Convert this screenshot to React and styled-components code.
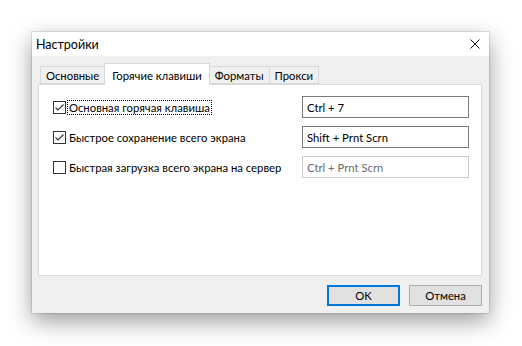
import React from "react";
import styled, { createGlobalStyle } from "styled-components";

const GlobalStyle = createGlobalStyle`
  html, body {
    margin: 0;
    background: #ffffff;
  }
  body {
    font-family: Lato, "Noto Sans", sans-serif;
    font-size: 11.3px;
    color: #000;
  }
`;

const Page = styled.div`
  width: 522px;
  height: 346px;
  padding: 32px 0 0 32px;
  box-sizing: border-box;
`;

const Window = styled.div`
  width: 457px;
  height: 281px;
  background: #f0f0f0;
  display: flex;
  flex-direction: column;
  box-shadow: 0 0 0 1px rgba(0, 0, 0, 0.1), 0 8px 22px rgba(0, 0, 0, 0.4);
`;

const TitleBar = styled.div`
  height: 25px;
  background: #ffffff;
  display: flex;
  align-items: center;
  justify-content: space-between;
  padding: 0 9px 0 4px;
  font-size: 12.5px;
`;

const CloseButton = styled.div`
  width: 10px;
  height: 10px;
  display: flex;
`;

const Body = styled.div`
  flex: 1;
  display: flex;
  flex-direction: column;
  padding: 7px 7px 7px 6px;
`;

const TabStrip = styled.div`
  display: flex;
  align-items: flex-end;
  height: 21px;
  padding-left: 3px;
  position: relative;
  z-index: 1;
`;

const Tab = styled.div`
  box-sizing: border-box;
  height: ${({ $active }) => ($active ? "22px" : "18px")};
  margin-bottom: ${({ $active }) => ($active ? "-1px" : "0")};
  padding: ${({ $active }) => ($active ? "1px 7px 0" : "0 5px")};
  background: ${({ $active }) => ($active ? "#ffffff" : "#f0f0f0")};
  border: 1px solid #d9d9d9;
  border-bottom: ${({ $active }) => ($active ? "none" : "1px solid #d9d9d9")};
  margin-left: -1px;
  display: flex;
  align-items: center;
  white-space: nowrap;
`;

const Panel = styled.div`
  height: 192px;
  box-sizing: border-box;
  background: #ffffff;
  border: 1px solid #d9d9d9;
  padding: 11px 12px 0 14px;
  display: flex;
  flex-direction: column;
  gap: 8px;
`;

const Row = styled.div`
  display: flex;
  align-items: center;
  justify-content: space-between;
  height: 22px;
`;

const CheckLabel = styled.label`
  display: flex;
  align-items: center;
  white-space: nowrap;
`;

const Box = styled.span`
  width: 13px;
  height: 13px;
  box-sizing: border-box;
  border: 1px solid #333333;
  background: #ffffff;
  display: flex;
  align-items: center;
  justify-content: center;
  margin-right: 2px;
`;

const LabelText = styled.span`
  padding: 0 1px;
  line-height: 13px;
  outline: ${({ $focused }) => ($focused ? "1px dotted #000" : "none")};
`;

const KeyField = styled.div`
  width: 167px;
  height: 22px;
  box-sizing: border-box;
  border: 1px solid ${({ $disabled }) => ($disabled ? "#cccccc" : "#7a7a7a")};
  color: ${({ $disabled }) => ($disabled ? "#6d6d6d" : "#000")};
  background: #ffffff;
  padding: 0 4px;
  display: flex;
  align-items: center;
  white-space: nowrap;
`;

const Footer = styled.div`
  display: flex;
  justify-content: flex-end;
  gap: 9px;
  margin-top: 9px;
`;

const Button = styled.button`
  width: 73px;
  height: 21px;
  box-sizing: border-box;
  font: inherit;
  background: #e1e1e1;
  border: ${({ $default }) => ($default ? "2px solid #0078d7" : "1px solid #adadad")};
  padding: 0;
  color: #000;
`;

const Check = () => (
  <svg width="11" height="11" viewBox="0 0 11 11">
    <path d="M1.5 5.5 L4 8 L9.5 2.5" fill="none" stroke="#333" strokeWidth="1.1" />
  </svg>
);

const rows = [
  { label: "Основная горячая клавиша", keys: "Ctrl + 7", checked: true, focused: true },
  { label: "Быстрое сохранение всего экрана", keys: "Shift + Prnt Scrn", checked: true },
  { label: "Быстрая загрузка всего экрана на сервер", keys: "Ctrl + Prnt Scrn", checked: false },
];

const App = () => {
  return (
    <Page>
      <GlobalStyle />
      <Window>
        <TitleBar>
          <span>Настройки</span>
          <CloseButton>
            <svg width="10" height="10" viewBox="0 0 10 10">
              <path d="M0.5 0.5 L9.5 9.5 M9.5 0.5 L0.5 9.5" stroke="#111" strokeWidth="1" />
            </svg>
          </CloseButton>
        </TitleBar>
        <Body>
          <TabStrip>
            <Tab>Основные</Tab>
            <Tab $active>Горячие клавиши</Tab>
            <Tab>Форматы</Tab>
            <Tab>Прокси</Tab>
          </TabStrip>
          <Panel>
            {rows.map((r) => (
              <Row key={r.label}>
                <CheckLabel>
                  <Box>{r.checked && <Check />}</Box>
                  <LabelText $focused={r.focused}>{r.label}</LabelText>
                </CheckLabel>
                <KeyField $disabled={!r.checked}>{r.keys}</KeyField>
              </Row>
            ))}
          </Panel>
          <Footer>
            <Button $default>OK</Button>
            <Button>Отмена</Button>
          </Footer>
        </Body>
      </Window>
    </Page>
  );
};

export default App;
